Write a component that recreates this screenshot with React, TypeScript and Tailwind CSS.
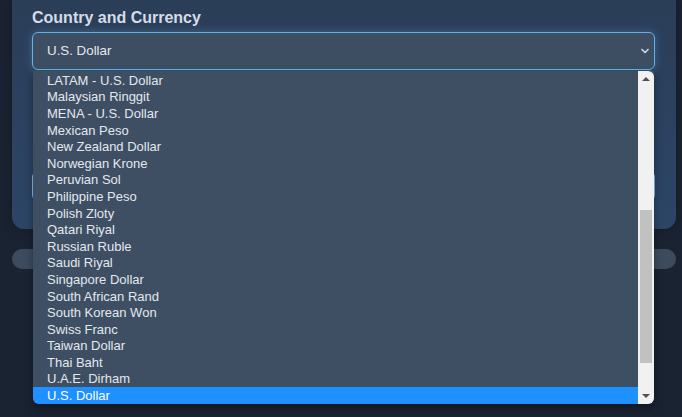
import { ChevronDown } from "lucide-react"

const currencies = [
  "LATAM - U.S. Dollar",
  "Malaysian Ringgit",
  "MENA - U.S. Dollar",
  "Mexican Peso",
  "New Zealand Dollar",
  "Norwegian Krone",
  "Peruvian Sol",
  "Philippine Peso",
  "Polish Zloty",
  "Qatari Riyal",
  "Russian Ruble",
  "Saudi Riyal",
  "Singapore Dollar",
  "South African Rand",
  "South Korean Won",
  "Swiss Franc",
  "Taiwan Dollar",
  "Thai Baht",
  "U.A.E. Dirham",
  "U.S. Dollar",
]

function CurrencyList() {
  return (
    <div className="absolute left-[33px] top-[71px] w-[621px] h-[333px] flex rounded-b-md bg-[#3e4f63] overflow-hidden shadow-[0_4px_10px_rgba(0,0,0,0.35)]">
      <div className="flex-1 flex flex-col pt-[1px]">
        {currencies.map((c) => (
          <div
            key={c}
            className={
              c === "U.S. Dollar"
                ? "h-[16.6px] pl-[14px] flex items-center text-[13px] leading-none bg-[#1e90ff] text-white"
                : "h-[16.6px] pl-[14px] flex items-center text-[13px] leading-none text-[#e3e8ee]"
            }
          >
            {c}
          </div>
        ))}
      </div>
      <div className="w-[16px] flex flex-col bg-[#f1f1f1] rounded-tr-md">
        <div className="h-[16px] flex items-center justify-center">
          <div className="w-0 h-0 border-x-[4px] border-x-transparent border-b-[4px] border-b-[#505050]" />
        </div>
        <div className="flex-1 flex flex-col px-[2px] pt-[123px] pb-[25px]">
          <div className="flex-1 bg-[#c1c1c1]" />
        </div>
        <div className="h-[16px] flex items-center justify-center">
          <div className="w-0 h-0 border-x-[4px] border-x-transparent border-t-[4px] border-t-[#505050]" />
        </div>
      </div>
    </div>
  )
}

export default function App() {
  return (
    <div
      className="relative w-[682px] h-[417px] overflow-hidden bg-[#1a2332] pl-3 pr-[6px]"
      style={{ fontFamily: '"Liberation Sans", Arial, sans-serif' }}
    >
      <div className="rounded-b-xl bg-gradient-to-b from-[#2b3e58] to-[#2c4566] pl-5 pr-[21px] pt-[6px] pb-[28px] shadow-[0_0_12px_rgba(0,0,0,0.25)]">
        <h2 className="text-base font-bold leading-6 text-[#d3dce7] mb-[2px]">Country and Currency</h2>
        <div className="h-[38px] flex items-center justify-between rounded-md border border-[#5fb3ea] bg-[#3d4e63] pl-[14px] pr-[3px] text-[13.33px] text-[#e3e8ee] shadow-[0_0_8px_rgba(95,179,234,0.35)]">
          <span>U.S. Dollar</span>
          <ChevronDown size={12} strokeWidth={3.5} className="text-[#c9d3de]" />
        </div>
        <div className="mt-[46px] h-[38px]" />
        <div className="mt-[17px] h-[30px] rounded-md border border-[#7cc0ec] bg-[#2f4a6b]" />
      </div>
      <div className="mt-[20px] h-[20px] rounded-full bg-[#3c4b5e]" />
      <CurrencyList />
    </div>
  )
}
